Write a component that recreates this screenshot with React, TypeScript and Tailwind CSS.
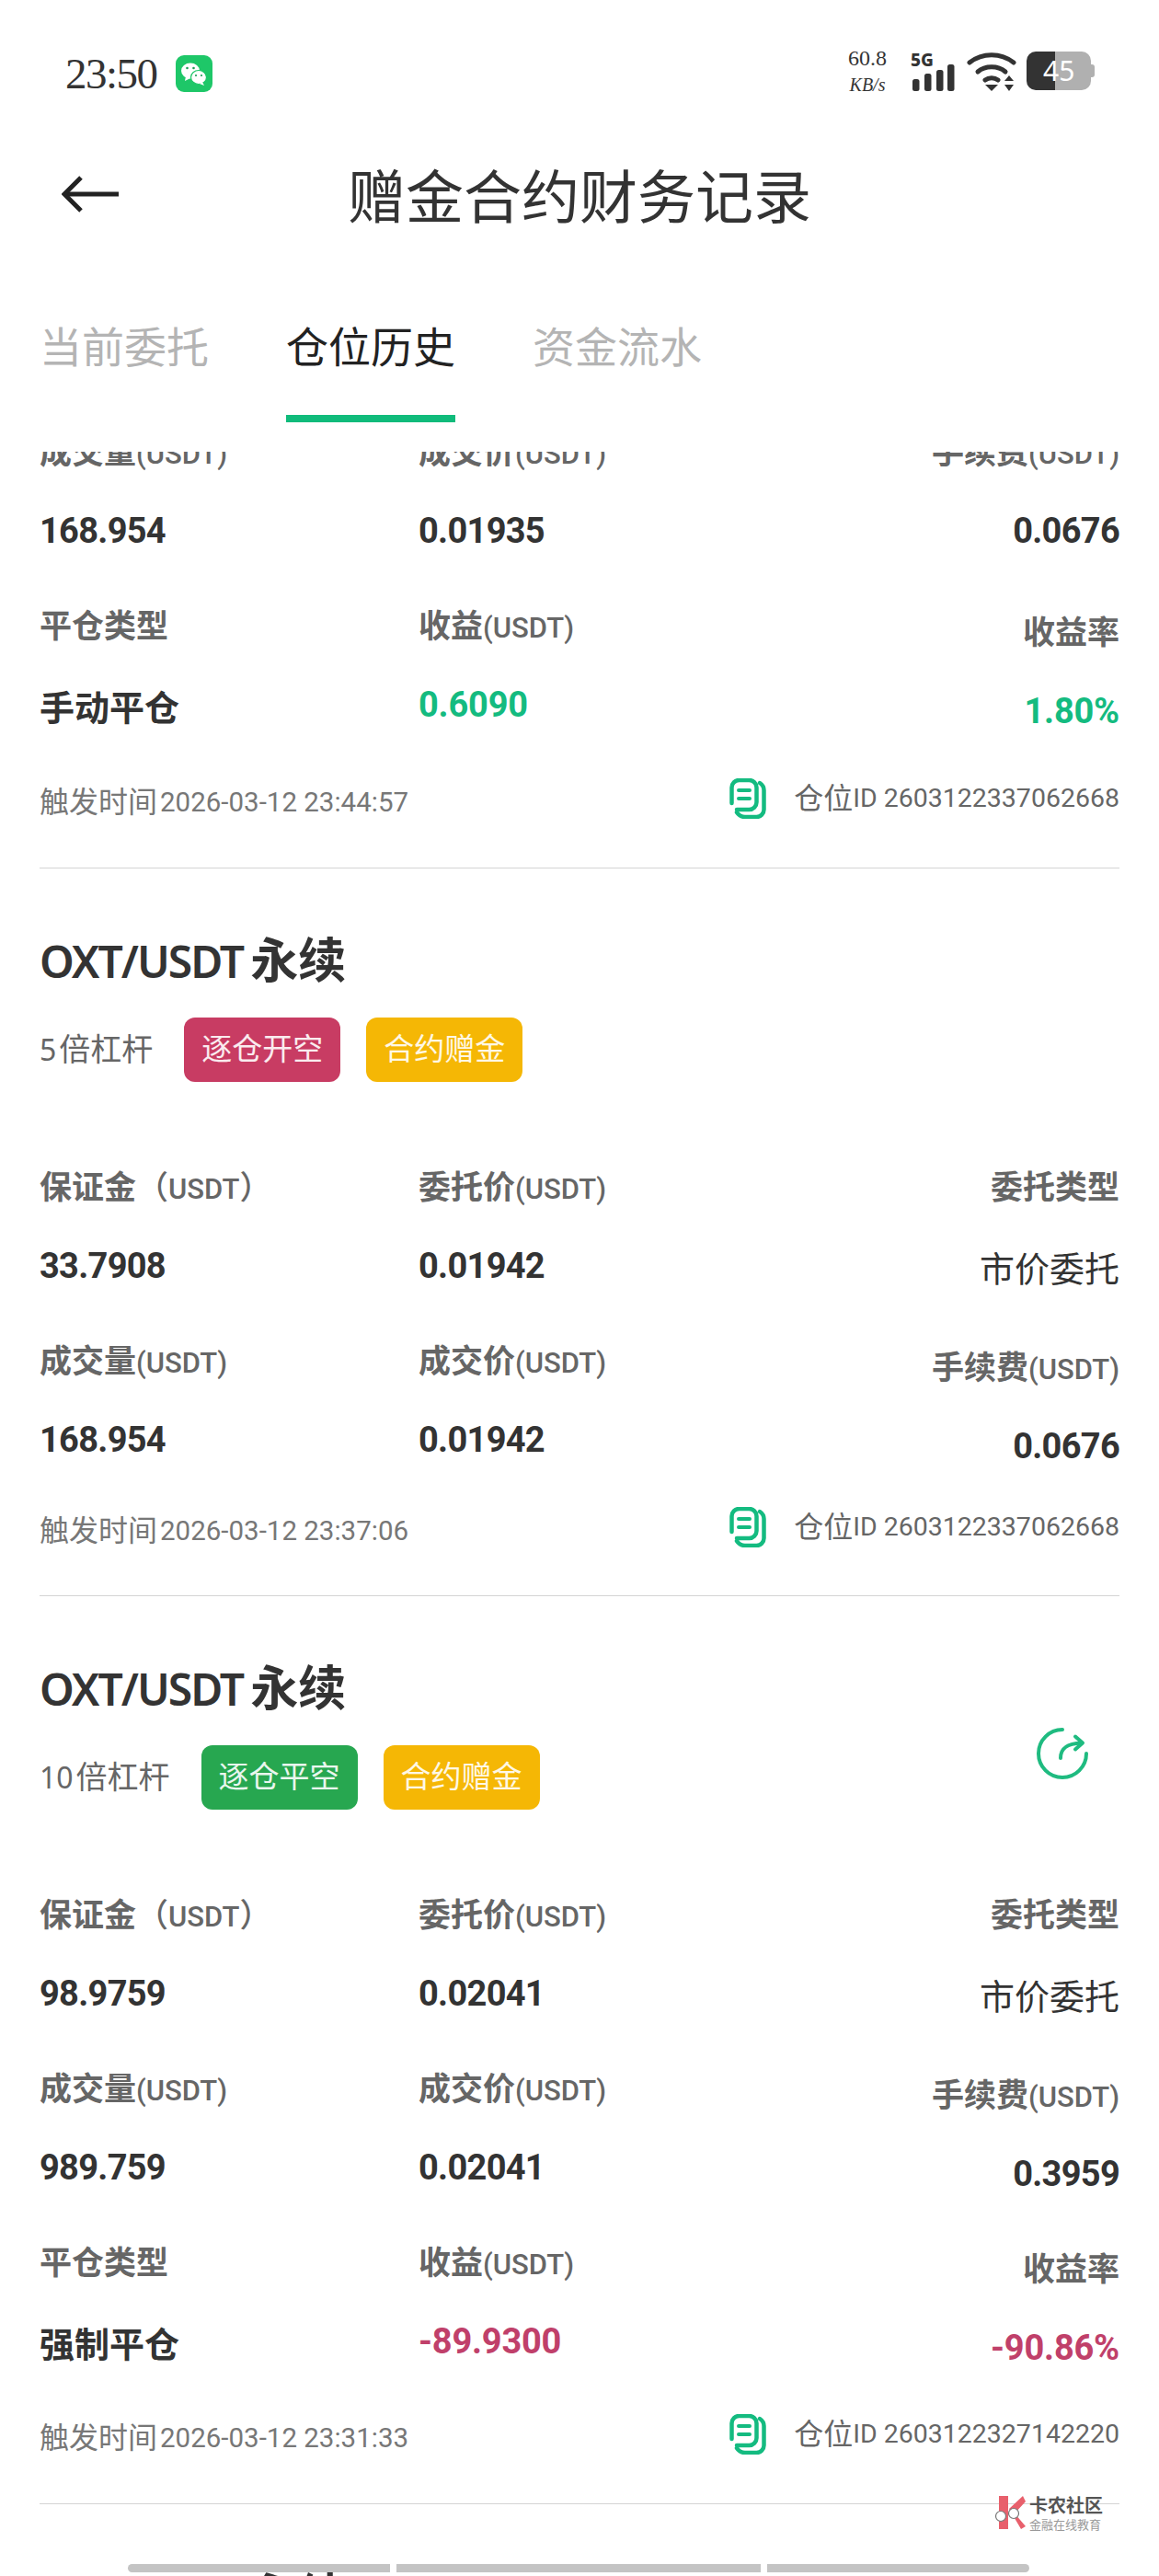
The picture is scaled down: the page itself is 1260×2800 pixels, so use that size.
import React from "react";

const cjk = "font-['Roboto','Noto_Sans_CJK_SC',sans-serif]";

type Cell = {
  label: string;
  unit?: string;
  wide?: boolean;
  value: string;
  kind?: "num" | "text" | "plain" | "up" | "down";
};

type Row = [Cell, Cell, Cell];

function WechatIcon() {
  return (
    <svg width="40" height="40" viewBox="0 0 40 40">
      <rect width="40" height="40" rx="9" fill="#1ec768" />
      <ellipse cx="16" cy="17" rx="10" ry="8.5" fill="#fff" />
      <path d="M11 23l-1 5 6-3z" fill="#fff" />
      <ellipse cx="25" cy="24" rx="8.5" ry="7.5" fill="#fff" stroke="#1ec768" strokeWidth="1.2" />
      <path d="M29 29l2 4-5-2z" fill="#fff" />
      <circle cx="12.5" cy="14" r="1.3" fill="#1a9e55" />
      <circle cx="19.5" cy="14" r="1.3" fill="#1a9e55" />
      <circle cx="22" cy="22" r="1.1" fill="#1a9e55" />
      <circle cx="28" cy="22" r="1.1" fill="#1a9e55" />
    </svg>
  );
}

function SignalIcon() {
  return (
    <svg width="48" height="44" viewBox="0 0 48 44" fill="#333">
      <text x="0" y="16" fontSize="19" fontWeight="800" fontFamily="Noto Sans, sans-serif">5G</text>
      <rect x="2" y="30" width="7.5" height="13" rx="2.5" />
      <rect x="15" y="24" width="7.5" height="19" rx="2.5" />
      <rect x="28" y="20" width="7.5" height="23" rx="2.5" />
      <rect x="40" y="14" width="7.5" height="29" rx="2.5" />
    </svg>
  );
}

function WifiIcon() {
  return (
    <svg width="54" height="44" viewBox="0 0 54 44" fill="none" stroke="#333" strokeWidth="5" strokeLinecap="round">
      <path d="M3 12C17 1 37 1 51 12" />
      <path d="M12 22C20 15 34 15 42 22" />
      <path d="M20 31C24 28 30 28 34 31" />
      <path d="M20 36h14l-7 7z" fill="#333" stroke="none" />
      <path d="M41 32l5-6 5 6zM41 36h10l-5 7z" fill="#333" stroke="none" />
    </svg>
  );
}

function BackArrow() {
  return (
    <svg width="64" height="40" viewBox="0 0 64 40" fill="none" stroke="#222" strokeWidth="5">
      <path d="M3 20H62" />
      <path d="M21 2L3 20L21 38" />
    </svg>
  );
}

function CopyIcon() {
  return (
    <svg width="40" height="44" viewBox="0 0 40 44" fill="none" stroke="#14bb80" strokeWidth="4.5" strokeLinecap="round">
      <path d="M2.5 27V10a8 8 0 0 1 8-8h11a8 8 0 0 1 8 8v16a8 8 0 0 1-8 8H8" />
      <path d="M33 5c3 2 4.5 5 4.5 8v21a8 8 0 0 1-8 8H17c-4 0-7-2-9-5" />
      <path d="M10 13h12M10 22h12" strokeWidth="4" />
    </svg>
  );
}

function RefreshIcon() {
  return (
    <svg width="58" height="58" viewBox="0 0 58 58" fill="none" stroke="#1fbb80" strokeWidth="4" strokeLinecap="round" strokeLinejoin="round">
      <path d="M29 3A26 26 0 1 0 55 29" />
      <path d="M27 34c0-10 6-16 23-16.5" />
      <path d="M43 10.5l8 7-8 7" />
    </svg>
  );
}

function WatermarkLogo() {
  return (
    <svg width="38" height="36" viewBox="0 0 38 36">
      <path d="M5 0h10v36H5z" fill="#e8606c" />
      <path d="M16 14L31 0l3 6-12 13 12 14-5 3z" fill="#e8606c" />
      <circle cx="7" cy="22" r="5.5" fill="#fff" stroke="#777" strokeWidth="1.2" />
      <circle cx="21" cy="19" r="5.5" fill="#fff" stroke="#777" strokeWidth="1.2" />
    </svg>
  );
}

function DataCell({ cell, align, row }: { cell: Cell; align: "left" | "right"; row: number }) {
  const kind = cell.kind ?? "num";
  return (
    <div className={`flex flex-col ${align === "right" ? "items-end" : "items-start"} ${align === "right" && row > 0 ? "mt-[7px]" : ""}`}>
      <div className="h-[44px] leading-[44px] whitespace-nowrap text-[#666]">
        <span className="text-[35px] font-bold">{cell.label}</span>
        {cell.wide ? (
          <>
            <span className="text-[35px] font-medium">（</span>
            <span className="text-[31px] font-medium">{cell.unit}</span>
            <span className="text-[35px] font-medium">）</span>
          </>
        ) : (
          cell.unit && <span className="text-[31px] font-medium">{cell.unit}</span>
        )}
      </div>
      {kind === "plain" ? (
        <div className="mt-[44px] h-[44px] leading-[44px] text-[38px] text-[#333] whitespace-nowrap">{cell.value}</div>
      ) : kind === "text" ? (
        <div className="mt-[44px] h-[44px] leading-[44px] text-[38px] font-bold text-[#333] whitespace-nowrap">{cell.value}</div>
      ) : (
        <div
          className={`mt-[40px] h-[44px] leading-[44px] text-[38px] font-bold whitespace-nowrap ${
            kind === "up"
              ? "text-[#14bb80] tracking-[-0.2px]"
              : kind === "down"
                ? "text-[#c0406a] tracking-[-0.2px]"
                : "text-[#333] tracking-[-0.7px]"
          }`}
        >
          {cell.value}
        </div>
      )}
    </div>
  );
}

function Rows({ rows }: { rows: Row[] }) {
  return (
    <div className="flex flex-col gap-[61px]">
      {rows.map((r, i) => (
        <div key={i} className="grid grid-cols-[412px_412px_1fr] h-[128px]">
          <DataCell cell={r[0]} align="left" row={i} />
          <DataCell cell={r[1]} align="left" row={i} />
          <DataCell cell={r[2]} align="right" row={i} />
        </div>
      ))}
    </div>
  );
}

function Footer({ time, id }: { time: string; id: string }) {
  return (
    <div className="flex items-center justify-between h-[48px] text-[#777]">
      <div className="mt-[8px] whitespace-nowrap flex items-center">
        <span className="text-[32px]">触发时间</span>
        <span className="text-[29.5px] ml-[3px]">{time}</span>
      </div>
      <div className="flex items-center whitespace-nowrap text-[#666]">
        <CopyIcon />
        <span className="text-[32px] ml-[30px]">仓位</span>
        <span className="text-[28.5px]">ID {id}</span>
      </div>
    </div>
  );
}

function CardHead({ lev, tag, tagColor, refresh }: { lev: string; tag: string; tagColor: string; refresh?: boolean }) {
  return (
    <>
      <div className="h-[60px] leading-[60px] mt-[69px] whitespace-nowrap text-[#333] font-['Noto_Sans','Noto_Sans_CJK_SC',sans-serif] font-semibold">
        <span className="text-[48px] tracking-[-2px]">OXT/USDT</span>
        <span className="text-[52px] font-bold ml-[8px]">永续</span>
      </div>
      <div className="flex items-center h-[70px] mt-[33px]">
        <div className="text-[#666] whitespace-nowrap">
          <span className="text-[32px] font-['Noto_Sans',sans-serif]">{lev}</span>
          <span className="text-[34px] ml-[3px]">倍杠杆</span>
        </div>
        <div className={`h-[70px] w-[170px] ml-[34px] rounded-[12px] ${tagColor} flex items-center justify-center text-[33px] text-white/90`}>{tag}</div>
        <div className="h-[70px] w-[170px] ml-[28px] rounded-[12px] bg-[#f5b705] flex items-center justify-center text-[33px] text-white/90">合约赠金</div>
        {refresh && (
          <div className="ml-auto mr-[33px] mb-[52px]">
            <RefreshIcon />
          </div>
        )}
      </div>
    </>
  );
}

const base2 = (margin: string, entry: string, vol: string, fill: string, fee: string): Row[] => [
  [
    { label: "保证金", unit: "USDT", wide: true, value: margin },
    { label: "委托价", unit: "(USDT)", value: entry },
    { label: "委托类型", value: "市价委托", kind: "plain" },
  ],
  [
    { label: "成交量", unit: "(USDT)", value: vol },
    { label: "成交价", unit: "(USDT)", value: fill },
    { label: "手续费", unit: "(USDT)", value: fee },
  ],
];

const closeRow = (type: string, pnl: string, rate: string, kind: "up" | "down"): Row => [
  { label: "平仓类型", value: type, kind: "text" },
  { label: "收益", unit: "(USDT)", value: pnl, kind },
  { label: "收益率", value: rate, kind },
];

export default function App() {
  return (
    <div className={`w-[1260px] h-[2800px] bg-white overflow-hidden relative flex flex-col ${cjk}`}>
      {/* status bar */}
      <div className="h-[160px] shrink-0 flex items-start justify-between pl-[71px] pr-[70px] pt-[56px]">
        <div className="flex items-center">
          <span className="text-[47px] leading-[48px] tracking-[-1.5px] text-[#333] font-['Liberation_Serif',serif]">23:50</span>
          <div className="ml-[20px]">
            <WechatIcon />
          </div>
        </div>
        <div className="flex items-start">
          <div className="w-[46px] flex flex-col items-center font-['Liberation_Serif',serif] text-[#333] mr-[24px] mt-[-6px]">
            <span className="text-[24px] leading-[26px]">60.8</span>
            <span className="text-[20px] leading-[24px] italic mt-[4px]">KB/s</span>
          </div>
          <SignalIcon />
          <div className="ml-[13px]">
            <WifiIcon />
          </div>
          <div className="ml-[11px] relative flex items-center">
            <div className="w-[31px] h-[42px] bg-[#333] rounded-l-[10px]" />
            <div className="w-[39px] h-[42px] bg-[#b0b0b0] rounded-r-[10px]" />
            <div className="w-[4px] h-[14px] bg-[#b0b0b0] rounded-r-[3px]" />
            <span className="absolute left-[18px] top-[3px] text-[30px] leading-[36px] text-white font-['Noto_Sans',sans-serif]">45</span>
          </div>
        </div>
      </div>

      {/* header */}
      <div className="h-[112px] shrink-0 relative flex items-center justify-center">
        <div className="absolute left-[67px] top-[31px]">
          <BackArrow />
        </div>
        <span className="text-[63px] text-[#333] font-normal">赠金合约财务记录</span>
      </div>

      {/* tabs */}
      <div className="h-[187px] shrink-0 flex items-end gap-[84px] px-[43px] text-[46px] text-[#b4b4b4]">
        <div className="h-[135px] pt-[20px]">当前委托</div>
        <div className="h-[135px] pt-[20px] text-[#222] border-b-[8px] border-[#10bb7b]">仓位历史</div>
        <div className="h-[135px] pt-[20px]">资金流水</div>
      </div>

      {/* list */}
      <div className="flex-1 min-h-0 mt-[32px] overflow-hidden px-[43px]">
        <div className="-mt-[20px]">
          <Rows
            rows={[
              [
                { label: "成交量", unit: "(USDT)", value: "168.954" },
                { label: "成交价", unit: "(USDT)", value: "0.01935" },
                { label: "手续费", unit: "(USDT)", value: "0.0676" },
              ],
              closeRow("手动平仓", "0.6090", "1.80%", "up"),
            ]}
          />
          <div className="mt-[56px] border-b border-[#d4d4d4] pb-[51px]">
            <Footer time="2026-03-12 23:44:57" id="2603122337062668" />
          </div>
        </div>

        <div className="border-b border-[#d4d4d4] pb-[50px]">
          <CardHead lev="5" tag="逐仓开空" tagColor="bg-[#c83c63]" />
          <div className="mt-[94px]">
            <Rows rows={base2("33.7908", "0.01942", "168.954", "0.01942", "0.0676")} />
          </div>
          <div className="mt-[49px]">
            <Footer time="2026-03-12 23:37:06" id="2603122337062668" />
          </div>
        </div>

        <div className="border-b border-[#d4d4d4] pb-[51px]">
          <CardHead lev="10" tag="逐仓平空" tagColor="bg-[#27a750]" refresh />
          <div className="mt-[94px]">
            <Rows
              rows={[
                ...base2("98.9759", "0.02041", "989.759", "0.02041", "0.3959"),
                closeRow("强制平仓", "-89.9300", "-90.86%", "down"),
              ]}
            />
          </div>
          <div className="mt-[55px]">
            <Footer time="2026-03-12 23:31:33" id="2603122327142220" />
          </div>
        </div>

        <CardHead lev="5" tag="逐仓开空" tagColor="bg-[#c83c63]" />
      </div>

      {/* screenshot-tool toolbar */}
      <div className="absolute left-[139px] top-[2787px] flex gap-[7px]">
        <div className="w-[285px] h-[9px] bg-[#c4c4c4] rounded-l-[5px]" />
        <div className="w-[396px] h-[9px] bg-[#c4c4c4]" />
        <div className="w-[285px] h-[9px] bg-[#c4c4c4] rounded-r-[5px]" />
      </div>

      {/* watermark */}
      <div className="absolute left-[1081px] top-[2713px] flex items-start">
        <WatermarkLogo />
        <div className="flex flex-col whitespace-nowrap">
          <span className="text-[20px] leading-[22px] font-bold text-[#555]">卡农社区</span>
          <span className="text-[13px] leading-[16px] mt-[2px] text-[#999]">金融在线教育</span>
        </div>
      </div>
    </div>
  );
}
